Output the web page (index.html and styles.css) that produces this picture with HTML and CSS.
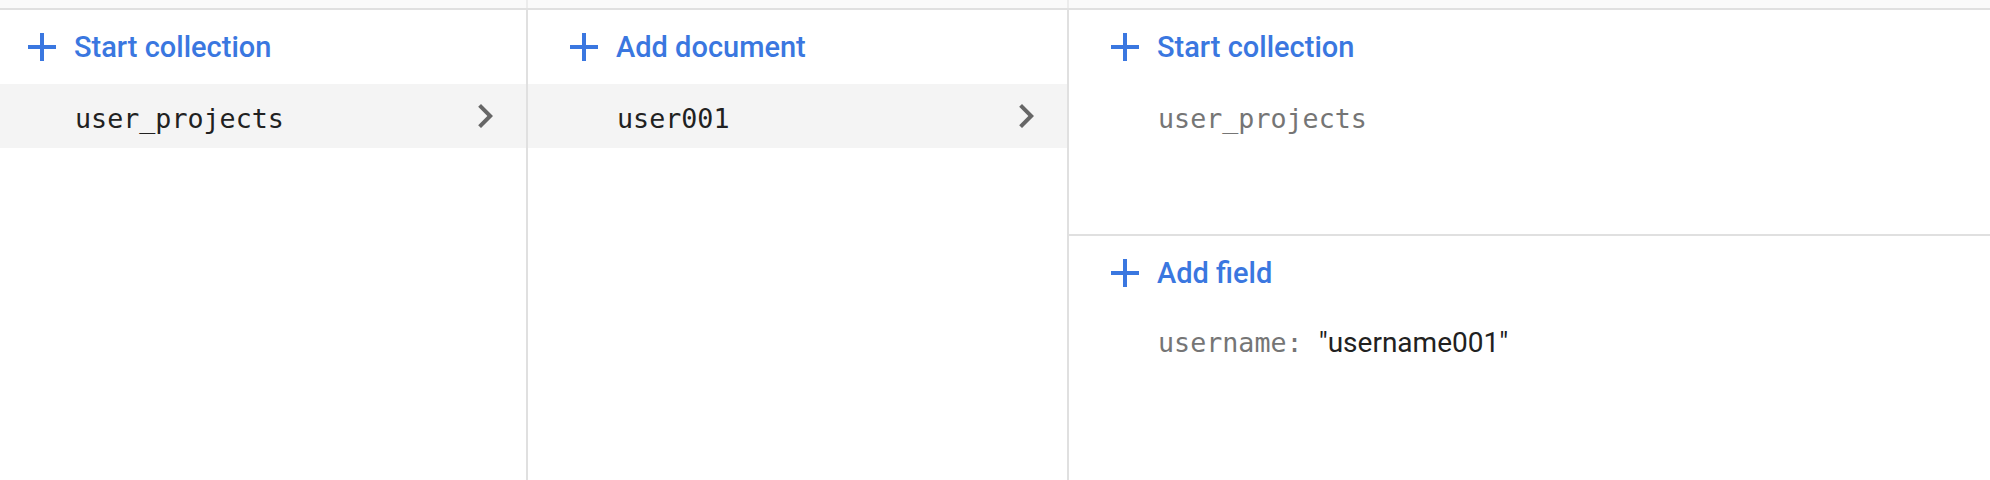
FILE: index.html
```html
<!DOCTYPE html>
<html lang="en">
<head>
<meta charset="utf-8">
<title>Firestore data</title>
<link rel="stylesheet" href="styles.css">
</head>
<body>
<div class="console">
  <div class="band">
    <div class="band-cell band-c1"></div>
    <div class="band-cell band-c2"></div>
    <div class="band-cell band-c3"></div>
  </div>
  <div class="columns">
    <section class="col col1">
      <div class="action">
        <svg class="plus" viewBox="0 0 28 28" width="28" height="28"><rect x="0" y="12" width="28" height="4"/><rect x="12" y="0" width="4" height="28"/></svg>
        <span>Start collection</span>
      </div>
      <div class="item active">
        <span class="name">user_projects</span>
        <svg class="chev" viewBox="0 0 24 24" width="48" height="48"><path d="M10 6L8.59 7.41 13.17 12l-4.58 4.59L10 18l6-6z"/></svg>
      </div>
    </section>
    <section class="col col2">
      <div class="action">
        <svg class="plus" viewBox="0 0 28 28" width="28" height="28"><rect x="0" y="12" width="28" height="4"/><rect x="12" y="0" width="4" height="28"/></svg>
        <span>Add document</span>
      </div>
      <div class="item active">
        <span class="name">user001</span>
        <svg class="chev" viewBox="0 0 24 24" width="48" height="48"><path d="M10 6L8.59 7.41 13.17 12l-4.58 4.59L10 18l6-6z"/></svg>
      </div>
    </section>
    <section class="col col3">
      <div class="subsection">
        <div class="action">
          <svg class="plus" viewBox="0 0 28 28" width="28" height="28"><rect x="0" y="12" width="28" height="4"/><rect x="12" y="0" width="4" height="28"/></svg>
          <span>Start collection</span>
        </div>
        <div class="item muted">
          <span class="name">user_projects</span>
        </div>
      </div>
      <div class="fields">
        <div class="action">
          <svg class="plus" viewBox="0 0 28 28" width="28" height="28"><rect x="0" y="12" width="28" height="4"/><rect x="12" y="0" width="4" height="28"/></svg>
          <span>Add field</span>
        </div>
        <div class="item field">
          <span class="kv"><span class="key">username: </span><span class="val">"username001"</span></span>
        </div>
      </div>
    </section>
  </div>
</div>
</body>
</html>
```

FILE: styles.css
```css
* { box-sizing: border-box; }

html, body {
  margin: 0;
  padding: 0;
  background: #ffffff;
}

body {
  font-family: Roboto, "Noto Sans", "Liberation Sans", sans-serif;
  color: #212121;
}

.console {
  width: 1990px;
  height: 480px;
  display: flex;
  flex-direction: column;
  overflow: hidden;
}

.band {
  height: 10px;
  flex: none;
  display: flex;
  background: #fafafa;
  border-bottom: 2px solid #e0e0e0;
}

.band-cell { height: 100%; }
.band-c1 { width: 528px; border-right: 2px solid #ececec; }
.band-c2 { width: 541px; border-right: 2px solid #ececec; }
.band-c3 { flex: 1; }

.columns {
  flex: 1;
  display: flex;
}

.col {
  display: flex;
  flex-direction: column;
}

.col1 { width: 528px; border-right: 2px solid #e0e0e0; }
.col2 { width: 541px; border-right: 2px solid #e0e0e0; }
.col3 { flex: 1; }

.action {
  height: 74px;
  display: flex;
  align-items: center;
  gap: 18px;
  padding-left: 42px;
  color: #3a77e0;
  font-size: 29px;
  font-weight: 500;
}

.col1 .action { padding-left: 28px; }

.plus {
  flex: none;
  fill: #3a77e0;
}

.item {
  height: 64px;
  display: flex;
  align-items: center;
  justify-content: space-between;
  padding-top: 4px;
  padding-left: 89px;
  padding-right: 17px;
  font-family: "DejaVu Sans Mono", "Liberation Mono", monospace;
  font-size: 26.7px;
  color: #212121;
}

.col1 .item { padding-left: 75px; }

.item.active { background: #f4f4f4; }

.chev {
  flex: none;
  fill: #666666;
  margin-top: -4px;
}

.item.muted { color: #757575; }

.subsection {
  height: 224px;
  flex: none;
}

.fields {
  border-top: 2px solid #e0e0e0;
}

.item.field {
  justify-content: flex-start;
  padding-top: 0;
}

.key {
  color: #757575;
  white-space: pre;
}

.val {
  font-family: Roboto, "Liberation Sans", sans-serif;
  font-size: 28px;
  color: #212121;
}
```
